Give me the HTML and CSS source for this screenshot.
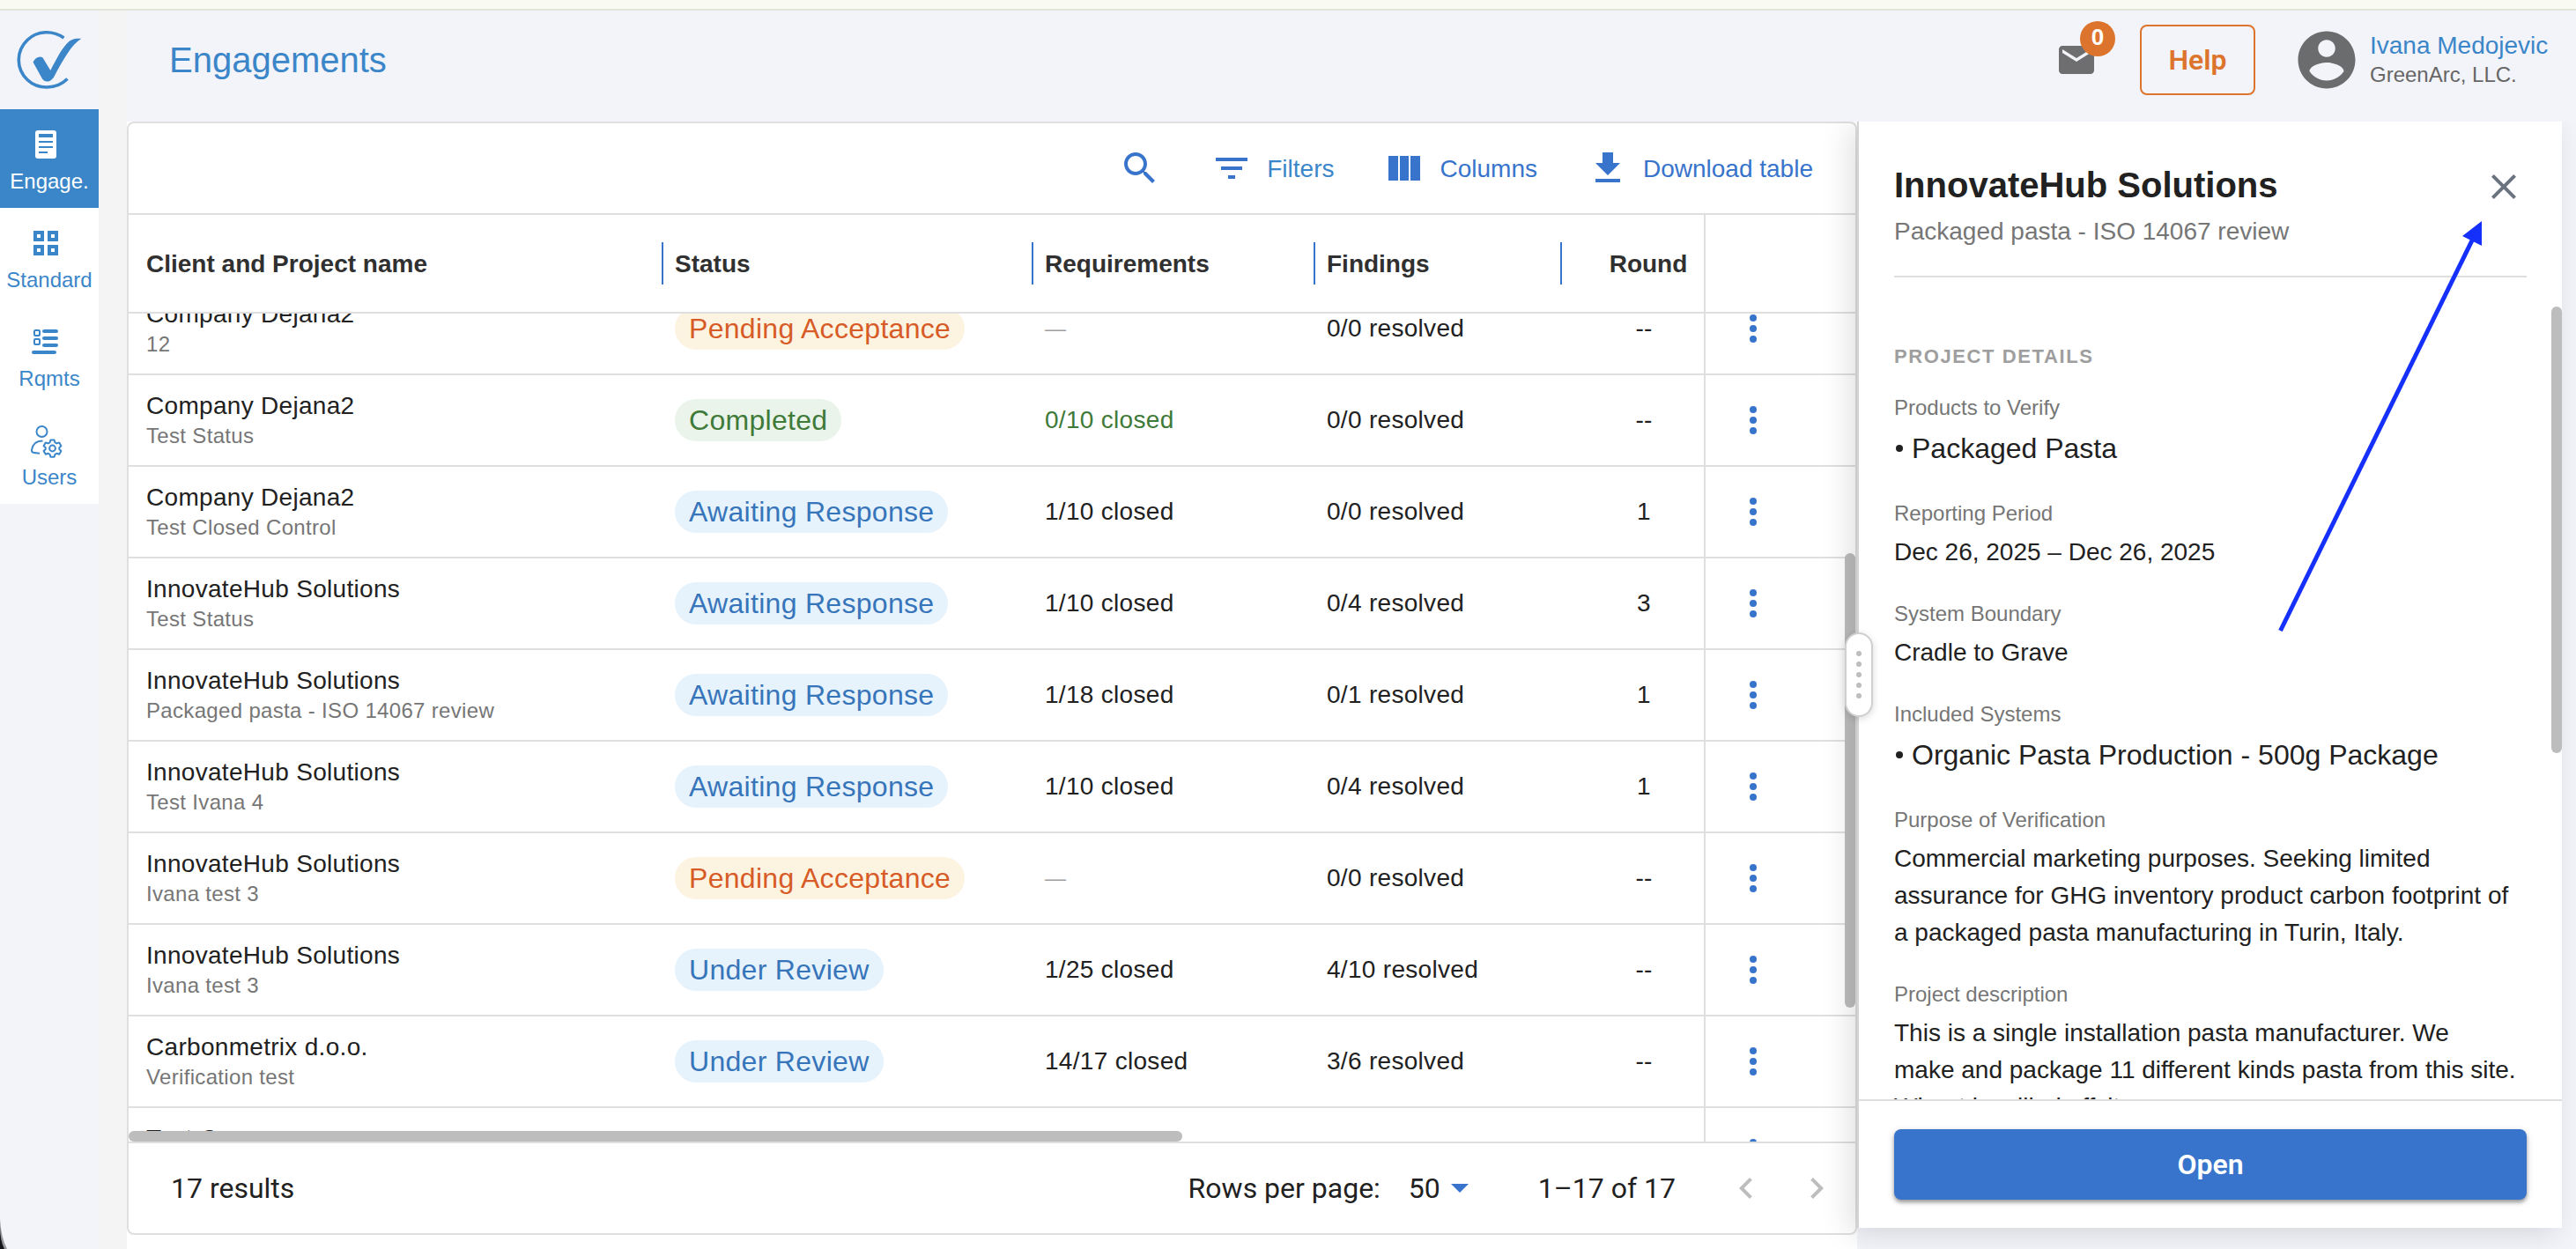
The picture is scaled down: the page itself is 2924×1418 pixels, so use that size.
FILE: index.html
```html
<!DOCTYPE html>
<html lang="en">
<head>
  <meta charset="UTF-8">
  <title>Engagements</title>
  <meta name="viewport" content="width=device-width, initial-scale=1.0">
  <link rel="stylesheet" href="styles.css">
</head>
<body>
  <div class="top-strip"></div>
  <div class="app">
    <nav class="sidebar">
      <div class="logo">
        <svg width="112" height="112" viewBox="0 12 112 112">
          <path d="M72.500 43C60 34 42 34.500 31 45.500C18 58 18 78 31 90.500C43 102 64 102 76.500 89.500" fill="none" stroke="#3b86c9" stroke-width="3.600"/>
          <path d="M37.500 70.500C40 65.500 45 63 48.500 65.500L57.300 80C64 67 71 53 79 46.500C83 43.500 88 43.500 92.300 43.700C82 51 76 60 62 86C58 94 51 94 48 89.500Z" fill="#3b86c9"/>
        </svg>
      </div>
      <a class="nav-item active">
        <svg width="48" height="48" viewBox="0 0 48 48">
          <rect x="12" y="8" width="24" height="32" rx="3" fill="#fff"/>
          <path d="M16 12h16v4H16zM16 20h16v2H16zM16 26h16v2H16zM16 32h10v2H16z" fill="#3b86c9"/>
        </svg>
        <span>Engage.</span>
      </a>
      <a class="nav-item">
        <svg width="48" height="48" viewBox="0 0 48 48">
          <path d="M12 12h8v8h-8zM28 12h8v8h-8zM12 28h8v8h-8zM28 28h8v8h-8z" fill="none" stroke="#3b86c9" stroke-width="4"/>
        </svg>
        <span>Standard</span>
      </a>
      <a class="nav-item">
        <svg width="48" height="48" viewBox="0 0 48 48">
          <g fill="none" stroke="#3b86c9" stroke-width="2">
            <rect x="11" y="11" width="6" height="6" rx="1"/>
            <rect x="11" y="21" width="6" height="6" rx="1"/>
          </g>
          <path d="M22 12h14M22 20h14M22 28h14M10 36h24" stroke="#3b86c9" stroke-width="4" stroke-linecap="round"/>
        </svg>
        <span>Rqmts</span>
      </a>
      <a class="nav-item">
        <svg width="48" height="48" viewBox="0 0 48 48" fill="none" stroke="#3b86c9" stroke-width="2">
          <circle cx="19.500" cy="14" r="6"/>
          <path d="M20.500 24.500C13 24.500 8.500 29 8 35.500C8 37 9 37.800 10.500 38L17 38.800"/>
          <circle cx="31.500" cy="33" r="3.400"/>
          <path d="M29.400 23.500h4.200l.8 2.800 2 1.100 2.800-.9 2.200 3.700-2.100 2v1.800l2.100 2-2.200 3.700-2.800-.9-2 1.100-.8 2.800h-4.200l-.8-2.800-2-1.100-2.800.9-2.200-3.700 2.100-2v-1.800l-2.100-2 2.200-3.700 2.800.9 2-1.100z" stroke-linejoin="round"/>
        </svg>
        <span>Users</span>
      </a>
    </nav>
    <div class="gutter"></div>
    <div class="content">
      <header class="header">
        <h1>Engagements</h1>
        <div class="mail">
          <svg width="48" height="48" viewBox="0 0 24 24" fill="#6e6e70"><path d="M20 4H4c-1.100 0-2 .9-2 2v12c0 1.100.9 2 2 2h16c1.100 0 2-.9 2-2V6c0-1.100-.9-2-2-2zm0 4l-8 5-8-5V6l8 5 8-5v2z"/></svg>
          <span class="badge">0</span>
        </div>
        <button class="help-btn">Help</button>
        <svg class="avatar" width="78" height="78" viewBox="0 0 24 24" fill="#6b6c6e"><path d="M12 2C6.480 2 2 6.480 2 12s4.480 10 10 10 10-4.480 10-10S17.520 2 12 2zm0 3c1.660 0 3 1.340 3 3s-1.340 3-3 3-3-1.340-3-3 1.340-3 3-3zm0 14.200c-2.500 0-4.710-1.280-6-3.220.03-1.990 4-3.080 6-3.080 1.990 0 5.970 1.090 6 3.080-1.290 1.940-3.500 3.220-6 3.220z"/></svg>
        <div class="user">
          <div class="user-name">Ivana Medojevic</div>
          <div class="user-org">GreenArc, LLC.</div>
        </div>
      </header>

      <main class="main">
        <section class="card">
          <div class="toolbar">
            <svg width="48" height="48" viewBox="0 0 24 24"><path d="M15.500 14h-.79l-.28-.27C15.410 12.590 16 11.110 16 9.500 16 5.910 13.090 3 9.500 3S3 5.910 3 9.500 5.910 16 9.500 16c1.610 0 3.090-.59 4.230-1.570l.27.28v.79l5 4.990L20.490 19l-4.990-5zm-6 0C7.010 14 5 11.990 5 9.500S7.010 5 9.500 5 14 7.010 14 9.500 11.990 14 9.500 14z"/></svg>
            <div class="tool light">
              <svg width="48" height="48" viewBox="0 0 24 24"><path d="M10 18h4v-2h-4v2zM3 6v2h18V6H3zm3 7h12v-2H6v2z"/></svg>
              <span>Filters</span>
            </div>
            <div class="tool">
              <svg width="48" height="48" viewBox="0 0 48 48"><path d="M6 10h11v28H6zM19 10h10v28H19zM31 10h11v28H31z"/></svg>
              <span>Columns</span>
            </div>
            <div class="tool">
              <svg width="48" height="48" viewBox="0 0 24 24"><path d="M19 9h-4V3H9v6H5l7 7 7-7zM5 18v2h14v-2H5z"/></svg>
              <span>Download table</span>
            </div>
          </div>
          <div class="row head-row">
            <div class="cell">Client and Project name</div>
            <div class="cell">Status</div>
            <div class="cell">Requirements</div>
            <div class="cell">Findings</div>
            <div class="cell round">Round</div>
            <div class="cell actions"></div>
          </div>
          <div class="rows">
            <div class="rows-inner" id="rows">
              <!-- Rows are injected here -->
            </div>
            <div class="scroll-x"></div>
          </div>
          <div class="scroll-y"></div>
          <div class="footer">
            <span class="results">17 results</span>
            <span>Rows per page:</span>
            <span class="per-page">50 <i class="caret"></i></span>
            <span class="range">1–17 of 17</span>
            <svg width="48" height="48" viewBox="0 0 24 24"><path d="M15.410 7.410L14 6l-6 6 6 6 1.410-1.410L10.830 12z"/></svg>
            <svg class="next" width="48" height="48" viewBox="0 0 24 24"><path d="M10 6L8.590 7.410 13.170 12l-4.580 4.590L10 18l6-6z"/></svg>
          </div>
        </section>

        <aside class="panel">
          <div class="panel-head">
            <div>
              <h2>InnovateHub Solutions</h2>
              <p>Packaged pasta - ISO 14067 review</p>
            </div>
            <svg width="48" height="48" viewBox="0 0 24 24" fill="#6b7280"><path d="M19 6.410L17.590 5 12 10.590 6.410 5 5 6.410 10.590 12 5 17.590 6.410 19 12 13.410 17.590 19 19 17.590 13.410 12z"/></svg>
          </div>
          <div class="panel-body">
            <h3>PROJECT DETAILS</h3>
            <div class="label">Products to Verify</div>
            <div class="value bullet"><i></i>Packaged Pasta</div>
            <div class="label">Reporting Period</div>
            <div class="value">Dec 26, 2025 – Dec 26, 2025</div>
            <div class="label">System Boundary</div>
            <div class="value">Cradle to Grave</div>
            <div class="label">Included Systems</div>
            <div class="value bullet"><i></i>Organic Pasta Production - 500g Package</div>
            <div class="label">Purpose of Verification</div>
            <div class="value">Commercial marketing purposes. Seeking limited<br>assurance for GHG inventory product carbon footprint of<br>a packaged pasta manufacturing in Turin, Italy.</div>
            <div class="label">Project description</div>
            <div class="value">This is a single installation pasta manufacturer. We<br>make and package 11 different kinds pasta from this site.<br>Wheat is milled offsite</div>
            <div class="panel-scroll"></div>
          </div>
          <div class="panel-foot">
            <button class="open-btn">Open</button>
          </div>
          <div class="handle"><i></i><i></i><i></i><i></i><i></i></div>
        </aside>
      </main>
    </div>
  </div>

  <svg class="arrow" width="240" height="476" viewBox="2584 246 240 476">
    <path d="M2588.500 716L2807 271" stroke="#1530fa" stroke-width="5"/>
    <path d="M2817 251L2795 268L2817 279Z" fill="#1530fa"/>
  </svg>
  <svg class="corner" width="10" height="40" viewBox="0 0 10 40">
    <path d="M0 6Q1 26 8 40H0Z" fill="#9a9a9e"/>
    <path d="M0 14Q0 30 5 40H0Z" fill="#15151c"/>
  </svg>

  <script>
    const engagements = [
      ['Company Dejana2', '12', 'Pending Acceptance', '—', '0/0', '--'],
      ['Company Dejana2', 'Test Status', 'Completed', '0/10 closed', '0/0', '--'],
      ['Company Dejana2', 'Test Closed Control', 'Awaiting Response', '1/10 closed', '0/0', '1'],
      ['InnovateHub Solutions', 'Test Status', 'Awaiting Response', '1/10 closed', '0/4', '3'],
      ['InnovateHub Solutions', 'Packaged pasta - ISO 14067 review', 'Awaiting Response', '1/18 closed', '0/1', '1'],
      ['InnovateHub Solutions', 'Test Ivana 4', 'Awaiting Response', '1/10 closed', '0/4', '1'],
      ['InnovateHub Solutions', 'Ivana test 3', 'Pending Acceptance', '—', '0/0', '--'],
      ['InnovateHub Solutions', 'Ivana test 3', 'Under Review', '1/25 closed', '4/10', '--'],
      ['Carbonmetrix d.o.o.', 'Verification test', 'Under Review', '14/17 closed', '3/6', '--'],
      ['Test Company', '', '', '', '', '']
    ];
    const statusClass = { 'Pending Acceptance': 'pending', 'Completed': 'completed' };
    const dots = '<svg width="48" height="48" viewBox="0 0 24 24"><circle cx="12" cy="6" r="2"/><circle cx="12" cy="12" r="2"/><circle cx="12" cy="18" r="2"/></svg>';
    let html = '';
    for (let [client, project, status, reqs, findings, round] of engagements) {
      let cls = statusClass[status] || '';
      html += `<div class="row">
        <div class="cell name"><div><div class="client">${client}</div><div class="project">${project}</div></div></div>
        <div class="cell">${status ? `<span class="pill ${cls}">${status}</span>` : ''}</div>
        <div class="cell reqs ${reqs === '—' ? 'none' : cls}">${reqs}</div>
        <div class="cell">${findings ? findings + ' resolved' : ''}</div>
        <div class="cell round">${round}</div>
        <div class="cell actions">${dots}</div>
      </div>`;
    }
    document.getElementById('rows').innerHTML = html;
  </script>
</body>
</html>
```
FILE: styles.css
```css
* { box-sizing: border-box; }
body { margin: 0; height: 1418px; overflow: hidden; position: relative; background: #f3f4f9; font-family: "Liberation Sans", Arial, sans-serif; font-size: 28px; color: #212121; }
h1, h2, h3, p { margin: 0; }
svg { display: block; flex: none; }
button { font-family: Roboto, sans-serif; font-size: 32px; font-weight: 600; }

.top-strip { height: 12px; background: #f9faf1; border-bottom: 2px solid #e1e4d8; }
.app { display: flex; height: 1406px; }

/* sidebar */
.sidebar { width: 112px; flex: none; }
.logo { height: 112px; }
.nav-item { display: block; height: 112px; padding-top: 16px; background: #fff; color: #3b86c9; font-size: 24px; line-height: 36px; text-align: center; }
.nav-item svg { margin-left: 28px; }
.nav-item span { display: block; }
.nav-item.active { background: #3b86c9; color: #fff; }
.gutter { width: 32px; flex: none; background: #f4f4f4; }

/* header */
.content { flex: 1; display: flex; flex-direction: column; }
.header { height: 126px; display: flex; align-items: center; padding: 0 30px 14px 48px; }
.header h1 { flex: 1; font-size: 40px; font-weight: 400; color: #3b86c9; }
.mail { position: relative; margin-right: 48px; }
.badge { position: absolute; left: 28px; top: -20px; width: 40px; height: 40px; border-radius: 50%; background: #dd742d; color: #fff; font: 700 26px/37px "Liberation Sans", sans-serif; text-align: center; }
.help-btn { width: 131px; height: 80px; border: 2px solid #dd742d; border-radius: 8px; background: none; color: #dd742d; padding: 0; margin-right: 42px; }
.avatar { margin-right: 10px; }
.user { width: 204px; white-space: nowrap; }
.user-name { color: #3b86c9; line-height: 34px; }
.user-org { color: #666; font-size: 24px; line-height: 32px; }

/* table card */
.main { flex: 1; display: flex; align-items: flex-start; overflow: hidden; background: linear-gradient(to right, #fff 1964px, #f3f4f9 1964px); }
.card { position: relative; width: 1964px; height: 1264px; flex: none; background: #fff; border: 2px solid #dfdfdf; border-radius: 8px; }
.toolbar { height: 104px; display: flex; justify-content: flex-end; align-items: center; gap: 56px; padding-right: 48px; border-bottom: 2px solid #dfdfdf; color: #3874cb; fill: #3874cb; }
.tool { display: flex; align-items: center; gap: 16px; }
.tool span { padding-top: 1px; }
.tool.light { color: #3b86c9; }
.row { display: grid; grid-template-columns: 600px 420px 320px 280px 168px 172px; height: 104px; border-bottom: 2px solid #dfdfdf; }
.cell { display: flex; align-items: center; padding-left: 20px; white-space: nowrap; letter-spacing: 0.3px; }
.name { padding-bottom: 2px; }
.round { justify-content: center; padding-left: 32px; }
.actions { border-left: 2px solid #dfdfdf; padding-left: 30px; fill: #3874cb; }
.head-row { height: 112px; font-weight: 700; color: #303030; }
.head-row .cell { letter-spacing: 0; padding-top: 1px; }
.head-row .round { padding-left: 42px; }
/* column separators sit in the left padding of the header cells */
.head-row .cell:not(:first-child):not(.actions) { background: linear-gradient(#3874cb, #3874cb) 5px center / 2px 48px no-repeat; }
.rows { position: relative; height: 940px; overflow: hidden; }
.rows-inner { margin-top: -34px; }
.client { line-height: 36px; letter-spacing: 0.3px; }
.project { font-size: 24px; line-height: 31px; min-height: 31px; color: #767676; letter-spacing: 0.33px; }
.pill { height: 48px; line-height: 48px; padding: 0 16px; border-radius: 24px; font-size: 32px; letter-spacing: 0.3px; background: #e6f2fc; color: #3775ba; }
.pill.pending { background: #fdf3e1; color: #d75b26; }
.pill.completed { background: #eaf4ea; color: #407a39; }
.reqs.completed { color: #407a39; }
.reqs.none { color: #9e9e9e; font-size: 24px; }
.scroll-x { position: absolute; left: 0; bottom: 0; width: 1196px; height: 12px; border-radius: 6px; background: #bdbdbd; }
.scroll-y { position: absolute; right: 0; top: 488px; width: 12px; height: 516px; border-radius: 6px; background: #bdbdbd; }
.footer { height: 104px; border-top: 2px solid #dfdfdf; display: flex; align-items: center; padding-right: 20px; font-family: Roboto, sans-serif; font-size: 32px; fill: #bdbdbd; }
.results { flex: 1; padding-left: 48px; }
.per-page { display: flex; align-items: center; gap: 12px; margin-left: 32px; }
.caret { border: 10px solid transparent; border-top-color: #3874cb; border-bottom: 0; }
.range { margin: 0 56px 0 79px; }
.next { margin-left: 32px; }

/* details panel */
.panel { position: relative; width: 800px; height: 1256px; display: flex; flex-direction: column; background: #fff; border-left: 2px solid #d4d4d4; box-shadow: -8px 6px 32px rgba(0, 0, 0, 0.13); }
.panel-head { display: flex; justify-content: space-between; margin: 0 40px; padding-top: 47px; height: 177px; border-bottom: 2px solid #dedede; }
.panel-head h2 { font-size: 40px; line-height: 50px; }
.panel-head p { margin-top: 7px; line-height: 42px; color: #767676; }
.panel-head svg { margin-top: 3px; margin-right: 2px; }
.panel-body { position: relative; flex: 1; overflow: hidden; padding: 73px 0 0 40px; }
.panel-body h3 { font-size: 22px; line-height: 34px; letter-spacing: 1.6px; color: #9e9e9e; margin-bottom: 22px; }
.label { font-size: 24px; line-height: 38px; color: #767676; margin-bottom: 4px; }
.value { line-height: 42px; margin-bottom: 30px; white-space: nowrap; }
.bullet { display: flex; align-items: center; font-size: 32px; line-height: 46px; margin-bottom: 32px; }
.bullet i { width: 8px; height: 8px; margin: 0 10px 0 2px; border-radius: 50%; background: #212121; }
.panel-scroll { position: absolute; right: 0; top: 33px; width: 12px; height: 507px; border-radius: 6px; background: #bdbdbd; }
.panel-foot { height: 146px; border-top: 2px solid #dedede; padding: 32px 40px; }
.open-btn { width: 100%; height: 80px; border: 0; border-radius: 8px; background: #3874cb; color: #fff; box-shadow: 0 3px 4px rgba(0, 0, 0, 0.35), 0 2px 10px rgba(0, 0, 0, 0.12); }
.handle { position: absolute; left: -16px; top: 580px; width: 32px; height: 96px; border: 2px solid #cfcfcf; border-radius: 16px; background: #fff; display: flex; flex-direction: column; align-items: center; justify-content: center; gap: 6px; box-shadow: 0 2px 8px rgba(0, 0, 0, 0.15); }
.handle i { width: 6px; height: 6px; border-radius: 50%; background: #bdbdbd; }

.arrow { position: absolute; left: 2584px; top: 246px; }
.corner { position: absolute; left: 0; bottom: 0; }
```
